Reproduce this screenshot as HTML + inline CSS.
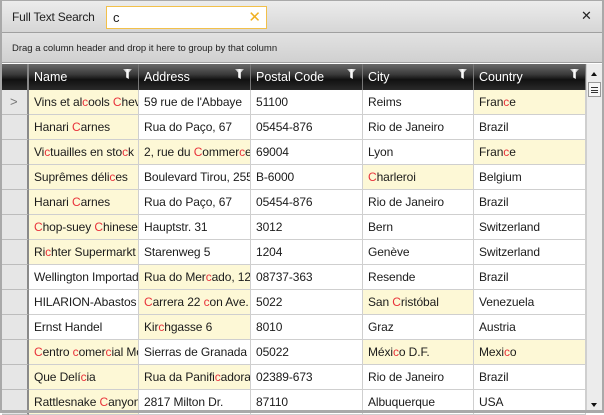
<!DOCTYPE html>
<html><head><meta charset="utf-8"><style>
*{margin:0;padding:0;box-sizing:border-box}
body{width:604px;height:413px;overflow:hidden;background:#fff;font-family:"Liberation Sans",sans-serif;font-size:12px;color:#1b1b1b;position:relative}
.top{position:absolute;left:1px;top:1px;width:602px;height:32px;background:linear-gradient(#ececec,#d6d6d6);border-bottom:1px solid #a0a0a0}
.top .lbl{position:absolute;left:11px;top:9px;font-size:12px;color:#222;letter-spacing:-0.2px}
.search{position:absolute;left:105px;top:5px;width:161px;height:23px;background:#fff;border:1px solid #f2c04a}
.search span{position:absolute;left:6px;top:3px;font-size:13px}
.search b{position:absolute;right:5px;top:1px;color:#f0b020;font-weight:normal;font-size:15px}
.closex{position:absolute;left:580px;top:7px;font-size:13px;color:#222}
.grp{position:absolute;left:1px;top:33px;width:602px;height:30px;background:linear-gradient(#e2e2e2,#d0d0d0);border-bottom:1px solid #a0a0a0}
.grp span{position:absolute;left:11px;top:10px;font-size:9.5px;color:#222}
.hdr{position:absolute;top:64px;height:26px;background:linear-gradient(#6a6a6a 0%,#3a3a3a 40%,#111 60%,#2a2a2a 100%);border-right:1px solid #777;color:#fff;font-size:12.5px}
.hdr span{position:absolute;left:5px;top:6px}
.hdr i{position:absolute;right:6px;top:5px;width:9px;height:10px;background:linear-gradient(90deg,#aaa,#fff,#aaa);clip-path:polygon(0 0,100% 0,65% 35%,65% 100%,35% 85%,35% 35%)}
.ind{position:absolute;left:2px;width:27px;background:#e6e6e6;border-bottom:1px solid #bcbcbc;border-right:2px solid #8a8a8a}
.c{position:absolute;height:25px;border-right:1px solid #cfcfcf;border-bottom:1px solid #cfcfcf;padding:5px 0 0 5px;white-space:nowrap;overflow:hidden;font-size:12px;letter-spacing:-0.1px}
.y{background:#fdf8d6}
em{font-style:normal;color:#e8323a}
.sb{position:absolute;left:586px;top:64px;width:16px;height:349px;background:#ececec;border-left:1px solid #cfcfcf}
</style></head><body>
<div class="top"><span class="lbl">Full Text Search</span><div class="search"><span>c</span><b>✕</b></div><span class="closex">✕</span></div>
<div class="grp"><span>Drag a column header and drop it here to group by that column</span></div>
<div class="hdr" style="left:2px;width:27px;border-right:2px solid #888"></div>
<div class="hdr" style="left:29px;width:110px"><span>Name</span><i></i></div>
<div class="hdr" style="left:139px;width:112px"><span>Address</span><i></i></div>
<div class="hdr" style="left:251px;width:112px"><span>Postal Code</span><i></i></div>
<div class="hdr" style="left:363px;width:111px"><span>City</span><i></i></div>
<div class="hdr" style="left:474px;width:112px"><span>Country</span><i></i></div>
<div class="sb"><div style="position:absolute;left:4px;top:8px;border:3px solid transparent;border-bottom:4px solid #111;border-top:0"></div>
<div style="position:absolute;left:1px;top:18px;width:13px;height:15px;background:#f6f6f6;border:1px solid #999"><div style="margin:4px 2px;height:6px;border-top:1px solid #333;border-bottom:1px solid #333;"><div style="margin-top:2px;border-top:1px solid #333"></div></div></div>
<div style="position:absolute;left:4px;top:339px;border:3px solid transparent;border-top:4px solid #111;border-bottom:0"></div></div>
<div id="rows"></div>
<script>
var R=[
["Vins et al<em>c</em>ools <em>C</em>hevalier",1,"59 rue de l'Abbaye",0,"51100","Reims",0,"Fran<em>c</em>e",1],
["Hanari <em>C</em>arnes",1,"Rua do Paço, 67",0,"05454-876","Rio de Janeiro",0,"Brazil",0],
["Vi<em>c</em>tuailles en sto<em>c</em>k",1,"2, rue du <em>C</em>ommer<em>c</em>e",1,"69004","Lyon",0,"Fran<em>c</em>e",1],
["Suprêmes déli<em>c</em>es",1,"Boulevard Tirou, 255",0,"B-6000","<em>C</em>harleroi",1,"Belgium",0],
["Hanari <em>C</em>arnes",1,"Rua do Paço, 67",0,"05454-876","Rio de Janeiro",0,"Brazil",0],
["<em>C</em>hop-suey <em>C</em>hinese",1,"Hauptstr. 31",0,"3012","Bern",0,"Switzerland",0],
["Ri<em>c</em>hter Supermarkt",1,"Starenweg 5",0,"1204","Genève",0,"Switzerland",0],
["Wellington Importadora",0,"Rua do Mer<em>c</em>ado, 12",1,"08737-363","Resende",0,"Brazil",0],
["HILARION-Abastos",0,"<em>C</em>arrera 22 <em>c</em>on Ave.",1,"5022","San <em>C</em>ristóbal",1,"Venezuela",0],
["Ernst Handel",0,"Kir<em>c</em>hgasse 6",1,"8010","Graz",0,"Austria",0],
["<em>C</em>entro <em>c</em>omer<em>c</em>ial Moctezuma",1,"Sierras de Granada 9993",0,"05022","Méxi<em>c</em>o D.F.",1,"Mexi<em>c</em>o",1],
["Que Delí<em>c</em>ia",1,"Rua da Panifi<em>c</em>adora, 12",1,"02389-673","Rio de Janeiro",0,"Brazil",0],
["Rattlesnake <em>C</em>anyon Grocery",1,"2817 Milton Dr.",0,"87110","Albuquerque",0,"USA",0]];
var h="";
R.forEach(function(r,i){var t=90+i*25;
h+='<div class="ind" style="top:'+t+'px;height:25px">'+(i==0?'<span style="position:absolute;left:8px;top:4px;color:#777;font-size:13px">&gt;</span>':'')+'</div>';
var cols=[[29,110,r[0],r[1]],[139,112,r[2],r[3]],[251,112,r[4],0],[363,111,r[5],r[6]],[474,112,r[7],r[8]]];
cols.forEach(function(c){h+='<div class="c'+(c[3]?' y':'')+'" style="left:'+c[0]+'px;top:'+t+'px;width:'+c[1]+'px">'+c[2]+'</div>';});});
document.getElementById("rows").innerHTML=h;
</script>
<div style="position:absolute;left:0;top:0;width:604px;height:413px;border-left:2px solid #a9a9a9;border-right:2px solid #a9a9a9;border-bottom:3px solid #a9a9a9;border-top:1px solid #a9a9a9;pointer-events:none"></div>
</body></html>
